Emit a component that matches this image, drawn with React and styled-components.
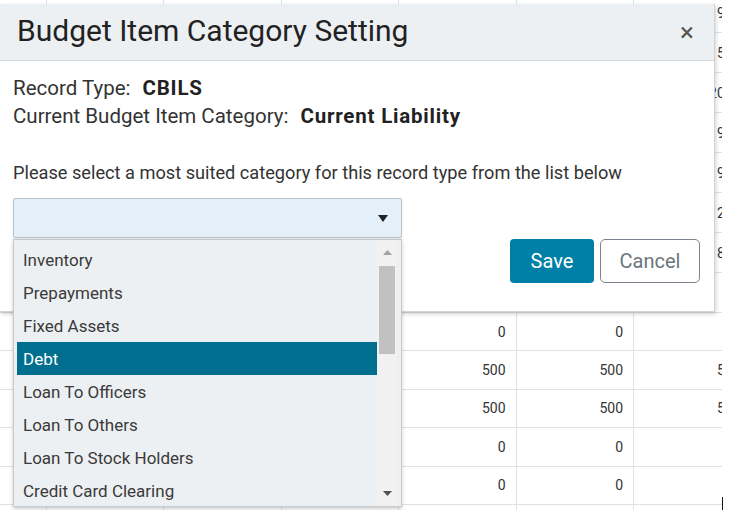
import React from 'react';
import styled, { createGlobalStyle } from 'styled-components';

const GlobalStyle = createGlobalStyle`
  html, body {
    margin: 0;
    padding: 0;
    background: #fff;
  }
  body {
    font-family: Roboto, "Liberation Sans", Arial, sans-serif;
    color: #333;
  }
`;

const topValues = ['975', '553', '2050', '937', '978', '250', '813', '0'];
const bottomRows = [
  ['0', '0', ''],
  ['500', '500', '500'],
  ['500', '500', '500'],
  ['0', '0', ''],
  ['0', '0', ''],
  ['', '', ''],
];

const categories = [
  'Inventory',
  'Prepayments',
  'Fixed Assets',
  'Debt',
  'Loan To Officers',
  'Loan To Others',
  'Loan To Stock Holders',
  'Credit Card Clearing',
];

const App = () => {
  const selected = 'Debt';

  const cells = [];
  topValues.forEach((v, r) => {
    for (let c = 0; c < 7; c++) {
      cells.push(<Cell key={`t${r}-${c}`}>{c === 6 ? v : ''}</Cell>);
    }
  });
  bottomRows.forEach((row, r) => {
    for (let c = 0; c < 7; c++) {
      cells.push(<Cell key={`b${r}-${c}`}>{c >= 4 ? row[c - 4] : ''}</Cell>);
    }
  });

  return (
    <Page>
      <GlobalStyle />
      <TableClip>
        <Grid>{cells}</Grid>
      </TableClip>
      <Caret />

      <Modal>
        <Header>
          <Title>Budget Item Category Setting</Title>
          <Close>×</Close>
        </Header>
        <Body>
          <InfoLine>
            Record Type:<Value>CBILS</Value>
          </InfoLine>
          <InfoLine>
            Current Budget Item Category:<Value>Current Liability</Value>
          </InfoLine>
          <Prompt>Please select a most suited category for this record type from the list below</Prompt>

          <SelectWrap>
            <SelectBox>
              <svg width="10" height="7" viewBox="0 0 10 7">
                <path d="M0 0 L10 0 L5 7 Z" fill="#222" />
              </svg>
            </SelectBox>
            <DropList>
              <Items>
                {categories.map((name) => (
                  <Item key={name} $active={name === selected}>
                    {name}
                  </Item>
                ))}
              </Items>
              <Scrollbar>
                <ScrollArrow $h={24}>
                  <svg width="9" height="5" viewBox="0 0 9 5">
                    <path d="M0 5 L9 5 L4.5 0 Z" fill="#a3a3a3" />
                  </svg>
                </ScrollArrow>
                <Thumb />
                <Spacer />
                <ScrollArrow $h={26}>
                  <svg width="9" height="5" viewBox="0 0 9 5">
                    <path d="M0 0 L9 0 L4.5 5 Z" fill="#505050" />
                  </svg>
                </ScrollArrow>
              </Scrollbar>
            </DropList>
          </SelectWrap>

          <Footer>
            <SaveButton>Save</SaveButton>
            <CancelButton>Cancel</CancelButton>
          </Footer>
        </Body>
      </Modal>
    </Page>
  );
};

export default App;

const Page = styled.div`
  position: relative;
  width: 737px;
  height: 510px;
  overflow: hidden;
  background: #fff;
`;

const TableClip = styled.div`
  width: 722px;
  height: 510px;
  overflow: hidden;
`;

const Grid = styled.div`
  display: grid;
  grid-template-columns: repeat(7, 117.5px);
  grid-template-rows: repeat(8, 40px) repeat(6, 38.4px);
  margin-left: -71px;
  margin-top: -7px;
  width: max-content;
`;

const Cell = styled.div`
  box-sizing: border-box;
  border-right: 1px solid #dde2e7;
  border-bottom: 1px solid #dde2e7;
  display: flex;
  align-items: center;
  justify-content: flex-end;
  padding-right: 10px;
  font-size: 14px;
  color: #333;
`;

const Caret = styled.div`
  position: absolute;
  left: 722px;
  top: 497px;
  width: 1px;
  height: 13px;
  background: #111;
`;

const Modal = styled.div`
  position: absolute;
  left: 0;
  top: 4px;
  width: 715px;
  box-sizing: border-box;
  background: #fff;
  border-right: 1px solid #cfd4d9;
  border-bottom: 1px solid #cfd4d9;
  box-shadow: 1px 2px 4px rgba(0, 0, 0, 0.18);
`;

const Header = styled.div`
  height: 56px;
  display: flex;
  align-items: center;
  justify-content: space-between;
  padding: 0 20px 0 17px;
  background: #edf0f3;
  border-bottom: 1px solid #d3d8dd;
`;

const Title = styled.div`
  font-size: 30px;
  line-height: 1;
  margin-top: -3px;
  color: #222;
`;

const Close = styled.div`
  font-size: 26px;
  line-height: 1;
  color: #555;
`;

const Body = styled.div`
  padding: 13px 14px 28px 13px;
`;

const InfoLine = styled.div`
  font-size: 20.5px;
  line-height: 28px;
  color: #333;
`;

const Value = styled.b`
  margin-left: 12px;
  font-weight: 700;
  letter-spacing: 0.8px;
  color: #222;
`;

const Prompt = styled.div`
  margin-top: 30px;
  font-size: 18.2px;
  line-height: 26px;
  color: #333;
`;

const SelectWrap = styled.div`
  position: relative;
  margin-top: 12px;
  width: 389px;
`;

const SelectBox = styled.div`
  box-sizing: border-box;
  height: 40px;
  display: flex;
  align-items: center;
  justify-content: flex-end;
  padding-right: 13px;
  background: #e3f0fa;
  border: 1px solid #bcc3ca;
  border-radius: 2px;
  box-shadow: 0 1px 2px rgba(0, 0, 0, 0.12);
`;

const DropList = styled.div`
  position: absolute;
  top: 100%;
  left: 0;
  margin-top: 1px;
  width: 389px;
  height: 268px;
  box-sizing: border-box;
  display: flex;
  background: #edf0f3;
  border: 1px solid #c5cad0;
  box-shadow: 0 2px 4px rgba(0, 0, 0, 0.2);
  z-index: 2;
`;

const Items = styled.div`
  flex: 1;
  display: flex;
  flex-direction: column;
  padding: 3px 0 0 3px;
  overflow: hidden;
`;

const Item = styled.div`
  flex: none;
  height: 33px;
  display: flex;
  align-items: center;
  padding-left: 6px;
  font-size: 17px;
  color: ${(p) => (p.$active ? '#fff' : '#3a3a3a')};
  background: ${(p) => (p.$active ? '#006f8f' : 'transparent')};
`;

const Scrollbar = styled.div`
  width: 20px;
  margin-right: 4px;
  display: flex;
  flex-direction: column;
  background: #f1f1f1;
`;

const ScrollArrow = styled.div`
  height: ${(p) => p.$h}px;
  display: flex;
  align-items: center;
  justify-content: center;
`;

const Thumb = styled.div`
  height: 88px;
  margin: 2px 2px 0;
  background: #c1c1c1;
`;

const Spacer = styled.div`
  flex: 1;
`;

const Footer = styled.div`
  display: flex;
  justify-content: flex-end;
  gap: 6px;
  margin-top: 1px;
`;

const SaveButton = styled.button`
  width: 84px;
  height: 44px;
  border: none;
  border-radius: 4px;
  background: #0080a6;
  color: #fff;
  font-family: inherit;
  font-size: 20px;
`;

const CancelButton = styled.button`
  width: 100px;
  height: 44px;
  border: 1px solid #7b858f;
  border-radius: 5px;
  background: #fff;
  color: #6c757d;
  font-family: inherit;
  font-size: 20px;
`;
